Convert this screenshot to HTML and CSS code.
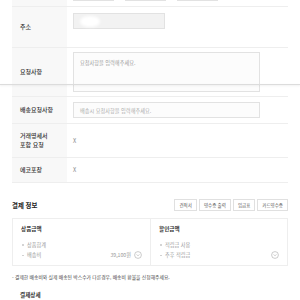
FILE: index.html
```html
<!DOCTYPE html>
<html lang="ko">
<head>
  <meta charset="UTF-8" />
  <title>주문서 작성</title>
  <link rel="stylesheet" href="styles.css">
</head>
<body>
  <div class="page">
    <div class="order-table">
      <div class="row row-phone">
        <div class="label"></div>
        <div class="field phone">
          <span class="input w-phone"></span>
          <span class="input w-phone"></span>
          <span class="input w-phone"></span>
        </div>
      </div>

      <div class="row row-addr">
        <div class="label">주소</div>
        <div class="field top">
          <span class="input w-addr filled"><span class="blur"></span></span>
        </div>
      </div>

      <div class="row row-req">
        <div class="label">요청사항</div>
        <div class="field top">
          <div class="textarea">요청사항을 입력해주세요.</div>
        </div>
      </div>

      <div class="row row-ship">
        <div class="label">배송요청사항</div>
        <div class="field top">
          <span class="input w-wide">배송시 요청사항을 입력해주세요.</span>
        </div>
      </div>

      <div class="row row-receipt">
        <div class="label">거래명세서<br>포함 요청</div>
        <div class="field value">X</div>
      </div>

      <div class="row row-eco">
        <div class="label">에코포장</div>
        <div class="field value">X</div>
      </div>
    </div>

    <div class="pay-head">
      <h2>결제 정보</h2>
      <div class="doc-btns">
        <span class="doc-btn">견적서</span>
        <span class="doc-btn">영수증 출력</span>
        <span class="doc-btn">입금표</span>
        <span class="doc-btn">카드영수증</span>
      </div>
    </div>

    <div class="pay-box">
      <div class="pay-col">
        <h3>상품금액</h3>
        <ul>
          <li><span>상품합계</span></li>
          <li><span>배송비</span><span class="amount">39,100원 <svg class="more" viewBox="0 0 8 8"><circle cx="4" cy="4" r="3.4"/><path d="M2.6 3.4 4 4.8 5.4 3.4"/></svg></span></li>
        </ul>
      </div>
      <div class="pay-col">
        <h3>할인금액</h3>
        <ul>
          <li><span>적립금 사용</span></li>
          <li><span>추후 적립금</span><span class="amount"><svg class="more" viewBox="0 0 8 8"><circle cx="4" cy="4" r="3.4"/><path d="M2.6 3.4 4 4.8 5.4 3.4"/></svg></span></li>
        </ul>
      </div>
    </div>

    <p class="notice">- 결제한 배송비와 실제 배송된 박스수가 다른경우, 배송비 환불을 신청해주세요.</p>

    <h3 class="detail-title">결제상세</h3>
  </div>

  <div class="sticky-line"></div>
</body>
</html>
```

FILE: styles.css
```css
body {
  margin: 0;
  font-family: "Noto Sans CJK KR", "Noto Sans", sans-serif;
  color: #333;
  background: #fff;
  overflow: hidden;
}

.page {
  margin-top: -21px;
  padding: 0 12px;
}

.order-table {
  width: 276px;
}

.row {
  display: grid;
  grid-template-columns: 55px 1fr;
  border-bottom: 1px solid #eeeeee;
}

.label {
  background: #f8f8f8;
  display: flex;
  align-items: center;
  padding-left: 8px;
  font-size: 6px;
  font-weight: 500;
  line-height: 8.5px;
  color: #333;
}

.field {
  padding-left: 6px;
  display: flex;
  align-items: center;
  font-size: 5.2px;
}

.field.top {
  align-items: flex-start;
}

.row-phone { height: 27px; }
.row-phone .field { gap: 11px; padding-top: 6px; align-items: flex-start; }

.row-addr { height: 40px; }
.row-addr .field { padding-top: 6px; }

.row-req { height: 48px; }
.row-req .field { padding-top: 4px; }

.row-ship { height: 26px; }
.row-ship .field { padding-top: 5px; }

.row-receipt { height: 33px; }
.row-eco { height: 24px; }

.input {
  display: flex;
  align-items: center;
  height: 16px;
  box-sizing: border-box;
  border: 1px solid #e2e2e2;
  background: #fcfcfc;
  padding-left: 6px;
  color: #aaa;
  font-size: 5.2px;
}

.w-phone { width: 41px; }
.w-addr { width: 92px; }
.w-wide { width: 187px; }

.input.filled {
  background: #f2f2f2;
}

.blur {
  width: 20px;
  height: 11px;
  border-radius: 50%;
  background: #fff;
  filter: blur(1.5px);
}

.textarea {
  width: 187px;
  height: 40px;
  box-sizing: border-box;
  border: 1px solid #e2e2e2;
  background: #fcfcfc;
  padding: 6px 0 0 6px;
  color: #999;
  font-size: 5.2px;
  line-height: 7px;
}

.value {
  color: #888;
  font-size: 5.6px;
}

.pay-head {
  display: flex;
  align-items: center;
  justify-content: space-between;
  width: 276px;
  margin-top: 16px;
  height: 12px;
}

.pay-head h2 {
  margin: 0;
  font-size: 6.4px;
  font-weight: 700;
  color: #222;
}

.doc-btns {
  display: flex;
  gap: 2px;
}

.doc-btn {
  display: flex;
  align-items: center;
  height: 12px;
  box-sizing: border-box;
  padding: 0 4px;
  border: 1px solid #e0e0e0;
  background: #fff;
  font-size: 4.5px;
  color: #555;
}

.pay-box {
  display: grid;
  grid-template-columns: 1fr 1fr;
  width: 276px;
  box-sizing: border-box;
  height: 48px;
  margin-top: 7px;
  border: 1px solid #eeeeee;
}

.pay-col {
  padding: 6px 8px 0 8px;
}

.pay-col + .pay-col {
  border-left: 1px solid #eeeeee;
}

.pay-col h3 {
  margin: 0 0 6px 0;
  font-size: 5.6px;
  line-height: 8px;
  font-weight: 700;
  color: #333;
}

.pay-col ul {
  list-style: none;
  margin: 0;
  padding: 0;
}

.pay-col li {
  display: flex;
  justify-content: space-between;
  align-items: center;
  height: 10.5px;
  padding-left: 6px;
  position: relative;
  font-size: 5.2px;
  color: #999;
}

.pay-col li:before {
  content: "";
  position: absolute;
  left: 1px;
  top: 5px;
  width: 1.5px;
  height: 1.5px;
  border-radius: 50%;
  background: #ccc;
}

.amount {
  display: flex;
  align-items: center;
  gap: 3px;
  color: #999;
}

.more {
  width: 8px;
  height: 8px;
  fill: none;
  stroke: #aaa;
  stroke-width: 0.6;
}

.notice {
  margin: 7px 0 0 0;
  font-size: 4.8px;
  line-height: 8px;
  color: #444;
}

.detail-title {
  margin: 10px 0 0 8px;
  font-size: 5.6px;
  line-height: 8px;
  font-weight: 700;
  color: #333;
}

.sticky-line {
  position: absolute;
  left: 0;
  top: 84px;
  width: 300px;
  height: 1px;
  background: #dcdcdc;
  box-shadow: 0 1px 2px rgba(0, 0, 0, 0.08);
}
```
